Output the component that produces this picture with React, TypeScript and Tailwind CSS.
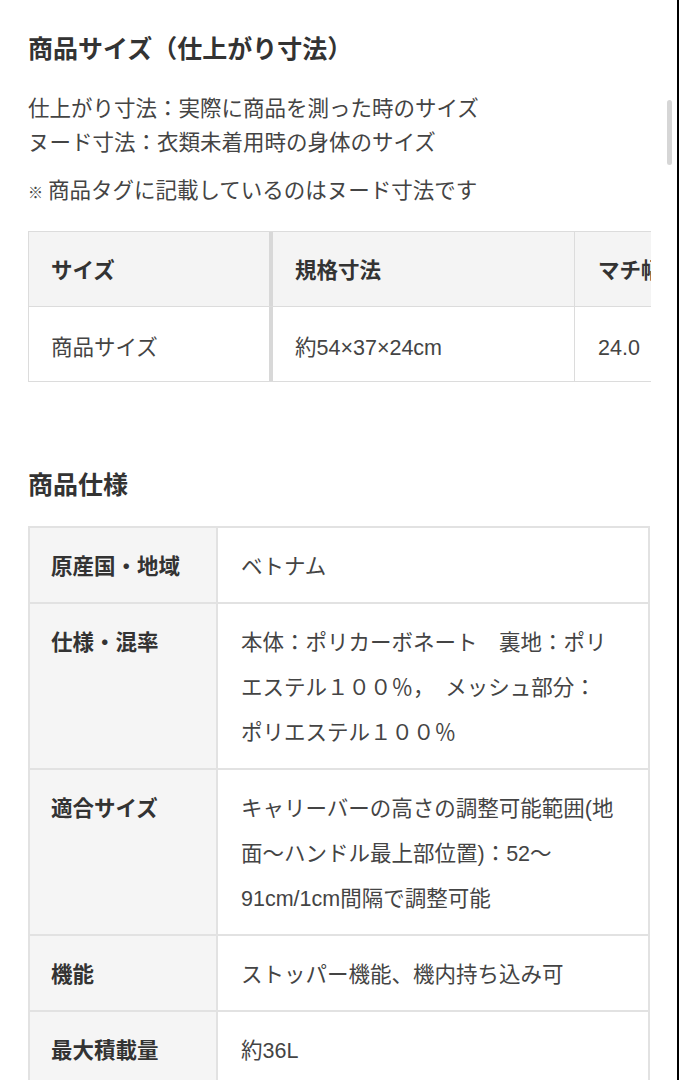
import React from "react";

const font = "font-['Liberation_Sans','Noto_Sans_CJK_JP',sans-serif]";

function SpecRow({ label, lines, last }: { label: string; lines: string[]; last?: boolean }) {
  return (
    <div className={`flex ${last ? "" : "border-b-2 border-[#e2e2e2]"}`}>
      <div className="w-[188px] shrink-0 border-r-2 border-[#e2e2e2] bg-[#f5f5f5] pb-[12px] pl-[21px] pt-[17px] font-bold leading-[45px] text-[#333]">
        {label}
      </div>
      <div className="flex-1 pb-[12px] pl-[23px] pt-[17px] leading-[45px] text-[#444]">
        {lines.map((l, i) => (
          <div key={i} className="whitespace-nowrap">
            {l}
          </div>
        ))}
      </div>
    </div>
  );
}

export default function App() {
  return (
    <div className={`relative h-[1080px] w-[679px] overflow-hidden bg-white ${font} text-[21.5px]`}>
      <div className="pl-[28px] pr-[29px] pt-[31px]">
        <h2 className="text-[25px] font-bold leading-[37.5px] text-[#333]">商品サイズ（仕上がり寸法）</h2>
        <div className="mt-[23px] leading-[34px] text-[#444]">
          <p>仕上がり寸法：実際に商品を測った時のサイズ</p>
          <p>ヌード寸法：衣類未着用時の身体のサイズ</p>
        </div>
        <p className="mt-[14px] leading-[34px] text-[#444]">
          <span className="inline-block w-[20px] text-[15px]">※</span>商品タグに記載しているのはヌード寸法です
        </p>

        <div className="mt-[21px] w-[623px] overflow-hidden">
          <div className="w-[820px] border-l border-t border-[#dcdcdc]">
            <div className="flex h-[75px] border-b border-[#dcdcdc] bg-[#f4f4f4] font-bold text-[#333]">
              <div className="flex w-[244px] shrink-0 items-center border-r-4 border-[#d8d8d8] pl-[22px] pt-[5px]">サイズ</div>
              <div className="flex w-[302px] shrink-0 items-center border-r border-[#dcdcdc] pl-[22px] pt-[5px]">規格寸法</div>
              <div className="flex flex-1 items-center pl-[23px] pt-[5px]">マチ幅(cm)</div>
            </div>
            <div className="flex h-[75px] border-b border-[#dcdcdc] bg-white text-[#444]">
              <div className="flex w-[244px] shrink-0 items-center border-r-4 border-[#d8d8d8] pl-[22px] pt-[9px]">商品サイズ</div>
              <div className="flex w-[302px] shrink-0 items-center border-r border-[#dcdcdc] pl-[22px] pt-[9px]">約54×37×24cm</div>
              <div className="flex flex-1 items-center pl-[23px] pt-[9px]">24.0</div>
            </div>
          </div>
        </div>

        <h2 className="mt-[85px] text-[25px] font-bold leading-[37.5px] text-[#333]">商品仕様</h2>

        <div className="mt-[22px] border-2 border-[#e2e2e2]">
          <SpecRow label="原産国・地域" lines={["ベトナム"]} />
          <SpecRow
            label="仕様・混率"
            lines={["本体：ポリカーボネート　裏地：ポリ", "エステル１００％，　メッシュ部分：", "ポリエステル１００％"]}
          />
          <SpecRow
            label="適合サイズ"
            lines={["キャリーバーの高さの調整可能範囲(地", "面〜ハンドル最上部位置)：52〜", "91cm/1cm間隔で調整可能"]}
          />
          <SpecRow label="機能" lines={["ストッパー機能、機内持ち込み可"]} />
          <SpecRow label="最大積載量" lines={["約36L"]} />
        </div>
      </div>

      <div className="absolute left-[667px] top-[100px] h-[65px] w-[5px] rounded-full bg-[#d6d6d6]" />
      <div className="absolute right-0 top-0 h-full w-[2px] bg-black" />
    </div>
  );
}
